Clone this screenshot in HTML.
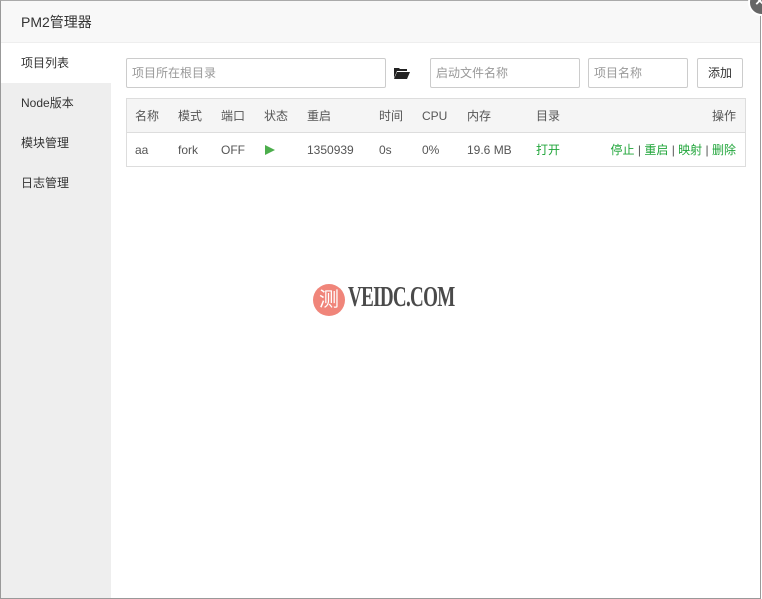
<!DOCTYPE html>
<html><head><meta charset="utf-8"><style>
*{box-sizing:border-box;margin:0;padding:0}
body{width:762px;height:599px;overflow:hidden;background:#fff;font-family:"Liberation Sans","Noto Sans CJK SC",sans-serif;font-size:12px;color:#555;position:relative}
.dlg{position:absolute;left:0;top:0;width:761px;height:599px;border:1px solid #999;border-top-color:#aaa;background:#fff}
.hd{position:absolute;left:0;top:0;right:0;height:42px;background:#f8f8f8;border-bottom:1px solid #eee;font-size:14px;color:#333;line-height:42px;padding-left:20px}
.side{position:absolute;left:0;top:42px;width:110px;bottom:0;background:#eee}
.side div{height:40px;line-height:40px;padding-left:20px;color:#333;font-size:12px}
.side .on{background:#fff}
.inp{position:absolute;top:58px;height:30px;border:1px solid #ccc;border-radius:2px;line-height:28px;padding-left:5px;color:#999;font-size:12px;background:#fff}
.btn{position:absolute;left:697px;top:58px;width:46px;height:30px;border:1px solid #ccc;border-radius:2px;line-height:28px;text-align:center;color:#333}
.tb{position:absolute;left:126px;top:98px;width:620px;height:69px;border:1px solid #ddd}
.tr{position:absolute;left:0;right:0;height:34px;line-height:34px}
.h{top:0;background:#f5f5f5;border-bottom:1px solid #ddd}
.r{top:34px}
.tr span{position:absolute}
.g{color:#20a53a}
.close{position:absolute;left:748px;top:-11px;width:27px;height:27px;border-radius:50%;background:#666;border:2px solid #fff;color:#fff;font-size:16px;line-height:22px;padding-left:5px;font-weight:bold}
</style></head><body>
<div class="dlg">
<div class="hd">PM2管理器</div>
<div class="side"><div class="on">项目列表</div><div>Node版本</div><div>模块管理</div><div>日志管理</div></div>
</div>
<div class="inp" style="left:126px;width:260px">项目所在根目录</div>
<svg style="position:absolute;left:394px;top:67px" width="16" height="12" viewBox="0 0 16 12"><path d="M0 1h5l1 1h7v2H3L0 11z" fill="#222"/><path d="M3 5h13l-3 7H0z" fill="#222"/></svg>
<div class="inp" style="left:430px;width:150px">启动文件名称</div>
<div class="inp" style="left:588px;width:100px">项目名称</div>
<div class="btn">添加</div>
<div class="tb">
<div class="tr h"><span style="left:8px">名称</span><span style="left:51px">模式</span><span style="left:94px">端口</span><span style="left:137px">状态</span><span style="left:180px">重启</span><span style="left:252px">时间</span><span style="left:295px">CPU</span><span style="left:340px">内存</span><span style="left:409px">目录</span><span style="right:9px">操作</span></div>
<div class="tr r"><span style="left:8px">aa</span><span style="left:51px">fork</span><span style="left:94px">OFF</span><span style="left:138px;top:12px;width:0;height:0;border-left:10px solid #4cae4c;border-top:5.5px solid transparent;border-bottom:5.5px solid transparent"></span><span style="left:180px">1350939</span><span style="left:252px">0s</span><span style="left:295px">0%</span><span style="left:340px">19.6 MB</span><span class="g" style="left:409px">打开</span><span style="right:9px"><span class="g" style="position:static">停止</span> | <span class="g" style="position:static">重启</span> | <span class="g" style="position:static">映射</span> | <span class="g" style="position:static">删除</span></span></div>
</div>
<div style="position:absolute;left:313px;top:284px;width:32px;height:32px;border-radius:50%;background:#f0857a;color:#fff;font-size:20px;line-height:32px;text-align:center">测</div>
<div style="position:absolute;left:348px;top:282px;font-family:'Liberation Serif',serif;font-weight:bold;font-size:28px;color:#4a4a4a;letter-spacing:-1px;transform:scaleX(0.68);transform-origin:left">VEIDC.COM</div>
<div class="close">×</div>
</body></html>
